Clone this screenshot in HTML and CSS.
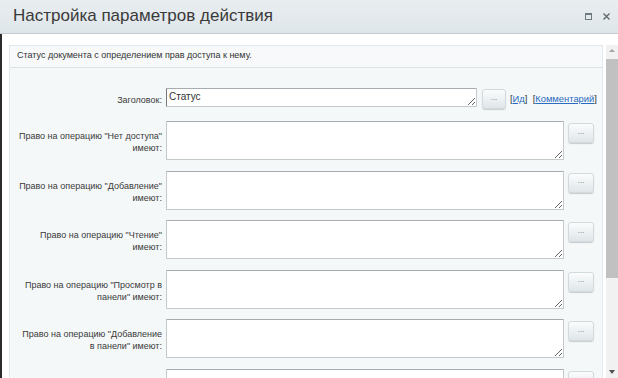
FILE: index.html
```html
<!DOCTYPE html>
<html lang="ru">
<head>
  <meta charset="UTF-8">
  <title>Настройка параметров действия</title>
  <link rel="stylesheet" href="styles.css">
</head>
<body>
  <div class="dialog">
    <div class="titlebar">
      <span class="title">Настройка параметров действия</span>
      <span class="tools">
        <svg class="tool" width="9" height="9" viewBox="0 0 9 9"><rect x="1.5" y="1.5" width="6" height="6" fill="none" stroke="#6f7a80" stroke-width="1"/><line x1="1.5" y1="2.5" x2="7.5" y2="2.5" stroke="#6f7a80"/></svg>
        <svg class="tool" width="9" height="9" viewBox="0 0 9 9"><path d="M1.5 1.5 L7.5 7.5 M7.5 1.5 L1.5 7.5" stroke="#5f6a70" stroke-width="1.4"/></svg>
      </span>
    </div>

    <div class="body">
      <div class="scroll">
        <div class="panel">
          <div class="descr">Статус документа с определением прав доступа к нему.</div>

          <div class="form">
            <div class="row row-head">
              <div class="label">Заголовок:</div>
              <div class="field">
                <textarea class="ta ta-head" rows="1">Статус</textarea>
                <button class="dots">...</button>
                <span class="links">[<a href="#">Ид</a>]&nbsp; [<a href="#">Комментарий</a>]</span>
              </div>
            </div>

            <div class="row">
              <div class="label">Право на операцию "Нет доступа"<br>имеют:</div>
              <div class="field">
                <textarea class="ta"></textarea>
                <button class="dots">...</button>
              </div>
            </div>

            <div class="row">
              <div class="label">Право на операцию "Добавление"<br>имеют:</div>
              <div class="field">
                <textarea class="ta"></textarea>
                <button class="dots">...</button>
              </div>
            </div>

            <div class="row">
              <div class="label">Право на операцию "Чтение"<br>имеют:</div>
              <div class="field">
                <textarea class="ta"></textarea>
                <button class="dots">...</button>
              </div>
            </div>

            <div class="row">
              <div class="label">Право на операцию "Просмотр в<br>панели" имеют:</div>
              <div class="field">
                <textarea class="ta"></textarea>
                <button class="dots">...</button>
              </div>
            </div>

            <div class="row">
              <div class="label">Право на операцию "Добавление<br>в панели" имеют:</div>
              <div class="field">
                <textarea class="ta"></textarea>
                <button class="dots">...</button>
              </div>
            </div>

            <div class="row">
              <div class="label"></div>
              <div class="field">
                <textarea class="ta"></textarea>
                <button class="dots"></button>
              </div>
            </div>
          </div>
        </div>
      </div>

      <div class="scrollbar">
        <div class="sb-arrow sb-up"></div>
        <div class="sb-thumb"></div>
        <div class="sb-track"></div>
        <div class="sb-arrow sb-down"></div>
      </div>
    </div>
  </div>
</body>
</html>
```

FILE: styles.css
```css
html, body {
  margin: 0;
  padding: 0;
  height: 100%;
  overflow: hidden;
  font-family: "Liberation Sans", Arial, sans-serif;
  background: #fff;
}

.dialog {
  display: flex;
  flex-direction: column;
  width: 618px;
  height: 378px;
  overflow: hidden;
}

/* title bar */
.titlebar {
  display: flex;
  align-items: center;
  justify-content: space-between;
  height: 33px;
  padding: 0 7px 0 13px;
  background: linear-gradient(#e8edf0, #dfe6e9);
  border-bottom: 1px solid #c5cbce;
  flex-shrink: 0;
}

.title {
  font-size: 17px;
  color: #3a3a3a;
  padding-bottom: 1px;
}

.tools {
  display: flex;
  gap: 9px;
  align-items: center;
}

.tool {
  display: block;
}

/* body */
.body {
  flex: 1;
  display: flex;
  border-left: 2px solid #2b2b2b;
  padding-top: 11px;
  min-height: 0;
}

.scroll {
  flex: 1;
  padding-left: 7px;
  padding-right: 3px;
  overflow: hidden;
}

.panel {
  background: #f5f8f9;
  border: 1px solid #e4e9eb;
  border-bottom: none;
  height: 100%;
}

.descr {
  font-size: 9px;
  color: #333;
  padding: 4px 7px 0;
  height: 17px;
  border-bottom: 1px solid #dde3e6;
  background: #f7f9fa;
}

.form {
  padding-top: 20px;
}

.row {
  display: flex;
  align-items: center;
  margin-bottom: 10.5px;
}

.row-head {
  margin-bottom: 12px;
}

.label {
  width: 152px;
  flex-shrink: 0;
  padding-right: 4px;
  text-align: right;
  white-space: nowrap;
  font-size: 9px;
  line-height: 12px;
  color: #3a3a3a;
  padding-top: 3px;
}

.field {
  display: flex;
  align-items: flex-start;
}

.ta {
  box-sizing: border-box;
  width: 398px;
  height: 39px;
  margin: 0;
  padding: 2px 3px;
  border: 1px solid #c4c9cc;
  border-top-color: #a6acb0;
  border-radius: 1px;
  background: #fff;
  font-family: "Liberation Sans", Arial, sans-serif;
  font-size: 10px;
  color: #333;
  resize: both;
}

.ta-head {
  width: 311px;
  height: 19px;
  padding: 2px 2px;
  border-left-color: #777;
}

.dots {
  box-sizing: border-box;
  width: 26px;
  height: 20px;
  margin: 2px 0 0 4px;
  padding: 0 0 4px;
  border: 1px solid #d3dadd;
  border-radius: 3px;
  background: linear-gradient(#fbfcfd, #dfe6e9);
  box-shadow: 0 1px 1px rgba(0, 0, 0, 0.18);
  font-family: "Liberation Sans", Arial, sans-serif;
  font-size: 8px;
  color: #6a7378;
  cursor: pointer;
}

.row-head .dots {
  width: 24px;
  margin: 1px 0 0 5px;
}

.links {
  margin-left: 4px;
  margin-top: 5px;
  font-size: 9.4px;
  color: #333;
  white-space: nowrap;
}

.links a {
  color: #2a6cbf;
}

/* scrollbar */
.scrollbar {
  width: 12px;
  display: flex;
  flex-direction: column;
  background: #f1f1f1;
  flex-shrink: 0;
}

.sb-arrow {
  height: 12px;
  position: relative;
  flex-shrink: 0;
}

.sb-up::after,
.sb-down::after {
  content: "";
  position: absolute;
  left: 3px;
  border-left: 3px solid transparent;
  border-right: 3px solid transparent;
}

.sb-up::after {
  top: 4px;
  border-bottom: 3px solid #a3a3a3;
}

.sb-down::after {
  top: 4px;
  border-top: 4px solid #505050;
}

.sb-thumb {
  height: 219px;
  margin: 2px 0 0;
  background: #c1c1c1;
  flex-shrink: 0;
}

.sb-track {
  flex: 1;
}
```
